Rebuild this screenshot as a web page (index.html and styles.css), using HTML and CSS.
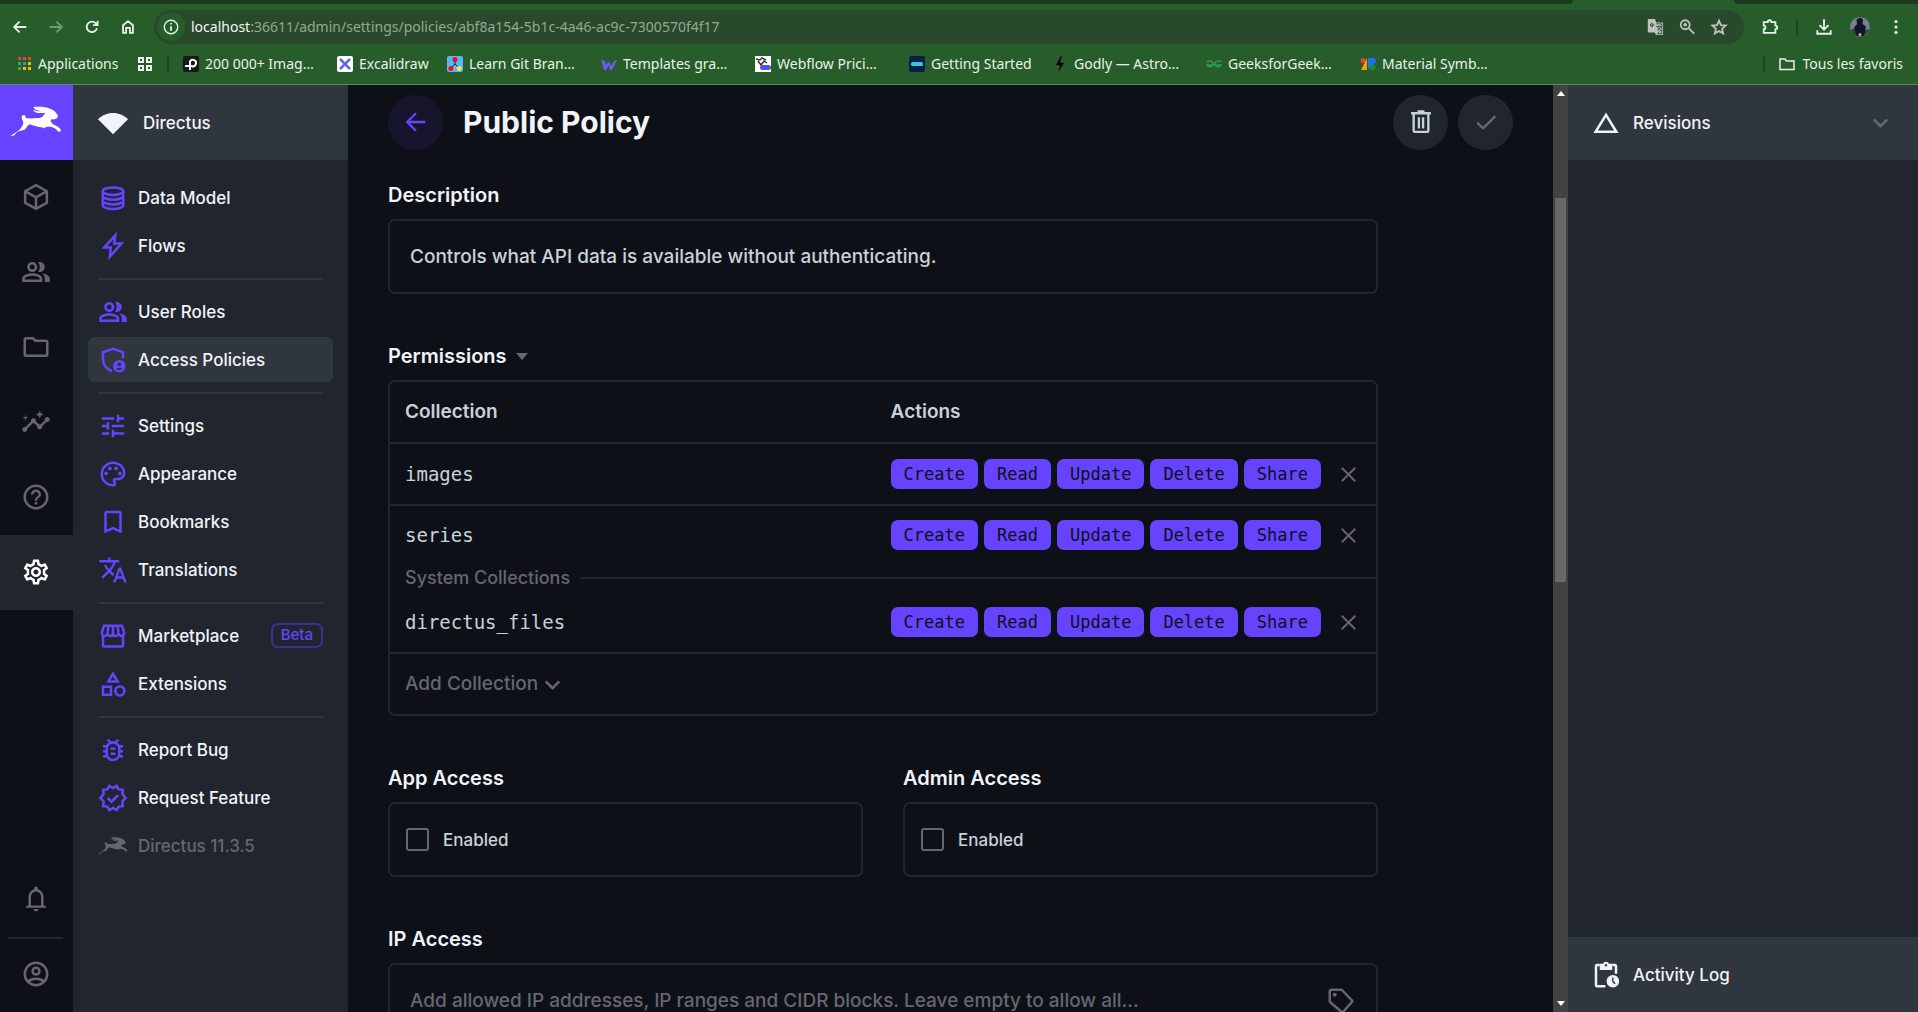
FILE: index.html
```html
<!DOCTYPE html>
<html lang="en">
<head>
<meta charset="utf-8">
<title>Public Policy</title>
<link rel="stylesheet" href="styles.css">
</head>
<body>
<svg class="sprite" aria-hidden="true">
  <symbol id="hare" viewBox="30 80 156 98"><path d="M33 172c0-4 4-6 8-8 8-5 14-9 20-15 6-6 9-13 9-20-1-5-6-8-5-15 1-5 6-7 9-5 4 2 1 6 4 8 14 3 28-1 42 0 8-4 14-10 15-16-8 1-17 2-24 0-7-2-11-6-12-9 10 5 19 5 27 5-8-1-17-3-22-7-3-3-4-6-2-7 10 1 22-1 33 2 7 1 12 4 17 5 7 2 13 6 17 13 4 4 5 7 4 11-2 5-9 8-16 7-5 0-6 3-4 7 3 6 9 9 15 12 6 3 12 7 14 12 1 3 0 6-3 6-4 1-6-2-8-4-5-6-10-9-17-10-9-2-17-1-24 4-3 0-4-2-2-4-12 3-25-4-38-8-6 2-9 6-12 12-4 7-13 7-22 9-7 2-9 8-12 11-4 3-8 3-12-1z"/></symbol>
  <symbol id="cube" viewBox="0 0 24 24"><path class="ln" d="M12 2.5l8.7 4.9v9.2L12 21.5l-8.700-4.900V7.400zM3.500 7.500L12 12.300l8.500-4.800M12 12.300v9"/></symbol>
  <symbol id="people" viewBox="0 0 24 24"><path d="M16.67 13.13C18.04 14.06 19 15.32 19 17v3h4v-3c0-2.18-3.57-3.47-6.33-3.87zM15 12c2.21 0 4-1.79 4-4s-1.79-4-4-4c-.47 0-.91.1-1.33.24C14.5 5.27 15 6.58 15 8s-.5 2.73-1.33 3.76c.42.14.86.24 1.33.24zM9 12c2.21 0 4-1.79 4-4s-1.79-4-4-4-4 1.79-4 4 1.79 4 4 4zm0-6c1.1 0 2 .9 2 2s-.9 2-2 2-2-.9-2-2 .9-2 2-2zm0 7c-2.67 0-8 1.34-8 4v3h16v-3c0-2.66-5.33-4-8-4zm6 5H3v-.99C3.2 16.29 6.3 15 9 15s5.8 1.29 6 2v1z"/></symbol>
  <symbol id="folder" viewBox="0 0 24 24"><path d="M9.17 6l2 2H20v10H4V6h5.17M10 4H4c-1.1 0-1.99.9-1.99 2L2 18c0 1.1.9 2 2 2h16c1.1 0 2-.9 2-2V8c0-1.100-.9-2-2-2h-8l-2-2z"/></symbol>
  <symbol id="insights" viewBox="0 0 24 24"><path d="M21 8c-1.45 0-2.26 1.44-1.93 2.51l-3.55 3.56c-.3-.09-.74-.09-1.04 0l-2.55-2.55C12.27 10.45 11.46 9 10 9c-1.45 0-2.27 1.44-1.93 2.52l-4.56 4.55C2.44 15.74 1 16.55 1 18c0 1.1.9 2 2 2 1.45 0 2.26-1.44 1.93-2.51l4.55-4.56c.3.09.74.09 1.04 0l2.55 2.55C12.73 16.55 13.54 18 15 18c1.45 0 2.27-1.44 1.93-2.52l3.56-3.55C21.56 12.26 23 11.45 23 10c0-1.1-.9-2-2-2zM15 9l.94-2.07L18 6l-2.060-.93L15 3l-.92 2.070L12 6l2.080.93zM3.500 11L4 9l2-.5L4 8l-.5-2L3 8l-2 .5L3 9z"/></symbol>
  <symbol id="help" viewBox="0 0 24 24"><path d="M11 18h2v-2h-2v2zm1-16C6.48 2 2 6.48 2 12s4.480 10 10 10 10-4.480 10-10S17.520 2 12 2zm0 18c-4.410 0-8-3.590-8-8s3.590-8 8-8 8 3.590 8 8-3.590 8-8 8zm0-14c-2.210 0-4 1.790-4 4h2c0-1.100.9-2 2-2s2 .9 2 2c0 2-3 1.750-3 5h2c0-2.250 3-2.500 3-5 0-2.210-1.790-4-4-4z"/></symbol>
  <symbol id="gear" viewBox="0 0 24 24"><path d="M19.43 12.98c.04-.32.07-.64.07-.98 0-.34-.03-.66-.07-.98l2.11-1.65c.19-.15.24-.42.12-.64l-2-3.46c-.09-.16-.26-.25-.44-.25-.06 0-.12.01-.17.03l-2.49 1c-.52-.4-1.08-.73-1.69-.98l-.38-2.65C14.46 2.18 14.25 2 14 2h-4c-.25 0-.46.18-.49.42l-.38 2.65c-.61.25-1.17.59-1.69.98l-2.49-1c-.06-.02-.12-.03-.18-.03-.17 0-.34.09-.43.25l-2 3.46c-.13.22-.07.49.12.64l2.11 1.65c-.04.32-.07.65-.07.98 0 .33.03.66.07.98l-2.11 1.65c-.19.15-.24.42-.12.64l2 3.46c.09.16.26.25.44.25.06 0 .12-.01.17-.03l2.49-1c.52.4 1.08.73 1.69.98l.38 2.65c.03.24.24.42.49.42h4c.25 0 .46-.18.49-.42l.38-2.65c.61-.25 1.17-.59 1.69-.98l2.49 1c.06.02.12.03.18.03.17 0 .34-.09.43-.25l2-3.46c.12-.22.07-.49-.12-.64l-2.11-1.65zm-1.98-1.71c.04.31.05.52.05.73 0 .21-.02.43-.05.73l-.14 1.13.89.7 1.08.84-.7 1.21-1.27-.51-1.04-.42-.9.68c-.43.32-.84.56-1.25.73l-1.06.43-.16 1.13-.2 1.35h-1.4l-.19-1.35-.16-1.13-1.06-.43c-.43-.18-.83-.41-1.23-.71l-.91-.7-1.06.43-1.27.51-.7-1.21 1.08-.84.89-.7-.14-1.13c-.03-.31-.05-.54-.05-.74s.02-.43.05-.73l.14-1.13-.89-.7-1.08-.84.7-1.21 1.27.51 1.04.42.9-.68c.43-.32.84-.56 1.25-.73l1.06-.43.16-1.13.2-1.35h1.39l.19 1.35.16 1.13 1.06.43c.43.18.83.41 1.23.71l.91.7 1.06-.43 1.27-.51.7 1.21-1.07.85-.89.7.14 1.13zM12 8c-2.210 0-4 1.790-4 4s1.790 4 4 4 4-1.790 4-4-1.790-4-4-4zm0 6c-1.100 0-2-.9-2-2s.9-2 2-2 2 .9 2 2-.9 2-2 2z"/></symbol>
  <symbol id="bell" viewBox="0 0 24 24"><path d="M4 19v-1.600h2V10q0-2.075 1.250-3.688T10.500 4.200v-.7q0-.625.438-1.062T12 2t1.063.438T13.500 3.500v.7q2 .5 3.250 2.113T18 10v7.400h2V19zm8 3q-.825 0-1.412-.587T10 20h4q0 .825-.587 1.413T12 22zm-4-4.800h8V10q0-1.650-1.175-2.825T12 6 9.175 7.175 8 10z"/></symbol>
  <symbol id="account" viewBox="0 0 24 24"><g class="ln"><circle cx="12" cy="12" r="9"/><circle cx="12" cy="9.700" r="2.700"/><path d="M5.500 18.100c3.500-3 9.500-3 13 0"/></g></symbol>
  <symbol id="project" viewBox="0 0 24 24"><path d="M12 4C7.310 4 3.070 5.900 0 8.980L12 21 24 8.980C20.930 5.900 16.690 4 12 4z"/></symbol>
  <symbol id="database" viewBox="0 0 24 24"><g class="ln"><ellipse cx="12" cy="6.500" rx="8.200" ry="3"/><path d="M3.800 6.500v11.300c0 1.600 3.700 3 8.200 3s8.200-1.400 8.200-3V6.500M3.800 10.300c0 1.600 3.700 3 8.200 3s8.200-1.400 8.200-3M3.800 14.100c0 1.600 3.700 3 8.200 3s8.200-1.400 8.200-3"/></g></symbol>
  <symbol id="bolt" viewBox="0 0 24 24"><path class="ln" d="M13.800 3.500L5 13.200h5.200L9.500 20.500 18.800 10h-5.900z"/></symbol>
  <symbol id="shield" viewBox="0 0 24 24"><path class="ln" d="M20 10.500V5.800L12 3 4 5.800v5.400c0 4.300 3 8 7.300 9.800"/><path fill-rule="evenodd" d="M17 12a5 5 0 1 1 0 10 5 5 0 0 1 0-10zm0 2a1.600 1.600 0 1 0 0 3.200 1.600 1.600 0 0 0 0-3.200zm-2.600 5c1.300 1.500 3.900 1.500 5.200 0-1.500-1-3.700-1-5.200 0z"/></symbol>
  <symbol id="tune" viewBox="0 0 24 24"><path d="M3 17v2h6v-2H3zM3 5v2h10V5H3zm10 16v-2h8v-2h-8v-2h-2v6h2zM7 9v2H3v2h4v2h2V9H7zm14 4v-2H11v2h10zm-6-4h2V7h4V5h-4V3h-2v6z"/></symbol>
  <symbol id="palette" viewBox="0 0 24 24"><path d="M12 22C6.490 22 2 17.510 2 12S6.490 2 12 2s10 4.040 10 9c0 3.310-2.690 6-6 6h-1.770c-.28 0-.5.22-.5.5 0 .12.05.23.13.33.41.47.64 1.060.64 1.670A2.500 2.500 0 0 1 12 22zm0-18c-4.410 0-8 3.590-8 8s3.590 8 8 8c.28 0 .5-.22.5-.5a.54.54 0 0 0-.14-.35c-.41-.46-.63-1.050-.63-1.650a2.500 2.500 0 0 1 2.500-2.500H16c2.210 0 4-1.790 4-4 0-3.860-3.590-7-8-7z"/><circle cx="6.500" cy="11.500" r="1.500"/><circle cx="9.500" cy="7.500" r="1.500"/><circle cx="14.500" cy="7.500" r="1.500"/><circle cx="17.500" cy="11.500" r="1.500"/></symbol>
  <symbol id="bookmark" viewBox="0 0 24 24"><path d="M17 3H7c-1.100 0-2 .9-2 2v16l7-3 7 3V5c0-1.100-.9-2-2-2zm0 15l-5-2.180L7 18V5h10v13z"/></symbol>
  <symbol id="translate" viewBox="0 0 24 24"><path d="M12.870 15.070l-2.540-2.510.03-.03c1.740-1.940 2.980-4.170 3.710-6.530H17V4h-7V2H8v2H1v1.990h11.170C11.500 7.920 10.440 9.750 9 11.350 8.070 10.320 7.300 9.190 6.690 8h-2c.73 1.630 1.730 3.170 2.980 4.560l-5.090 5.020L4 19l5-5 3.110 3.110.76-2.040zM18.500 10h-2L12 22h2l1.120-3h4.750L21 22h2l-4.500-12zm-2.620 7l1.620-4.330L19.120 17h-3.240z"/></symbol>
  <symbol id="store" viewBox="0 0 24 24"><g class="ln"><path d="M4 11.500V19.500q0 .8.800.8h14.400q.8 0 .8-.8V11.500"/><path d="M4.800 3.800h14.400l1.700 5.200c.4 3.800-4.200 3.800-4.500.6-.3 3.200-4.300 3.200-4.400 0-.1 3.200-4.100 3.200-4.400 0-.3 3.200-4.900 3.200-4.500-.6zM8.300 4l-.7 5.600M12 4v5.600M15.700 4l.7 5.600"/></g></symbol>
  <symbol id="shapes" viewBox="0 0 24 24"><path class="ln" d="M12 3.800L8.300 10h7.400zM4 14.200h6.400v6.400H4z"/><circle class="ln" cx="17.500" cy="17.500" r="3.600"/></symbol>
  <symbol id="bug" viewBox="0 0 24 24"><path d="M20 8h-2.810c-.45-.78-1.070-1.450-1.820-1.960L17 4.410 15.590 3l-2.170 2.170C12.960 5.060 12.490 5 12 5s-.96.06-1.410.17L8.410 3 7 4.410l1.620 1.630C7.880 6.550 7.260 7.220 6.810 8H4v2h2.090c-.05.33-.09.66-.09 1v1H4v2h2v1c0 .34.04.67.09 1H4v2h2.810c1.040 1.790 2.970 3 5.190 3s4.150-1.210 5.190-3H20v-2h-2.090c.05-.33.09-.66.09-1v-1h2v-2h-2v-1c0-.34-.04-.67-.09-1H20V8zm-4 4v3c0 .22-.03.47-.07.7l-.1.65-.37.65c-.72 1.240-2.040 2-3.460 2s-2.740-.77-3.460-2l-.37-.64-.1-.65C8.030 15.480 8 15.230 8 15v-4c0-.23.03-.48.07-.7l.1-.65.37-.65c.3-.52.72-.97 1.210-1.310l.57-.39.74-.18c.31-.08.63-.12.94-.12.32 0 .63.04.95.12l.68.16.61.42c.5.34.91.78 1.210 1.310l.38.65.1.65c.04.22.07.47.07.69v1zm-6 2h4v2h-4zm0-4h4v2h-4z"/></symbol>
  <symbol id="verified" viewBox="0 0 24 24"><path class="ln" d="M12 4.100l2.900-1.700 1.700 2.700 3.200.3-.3 3.300L22 12l-2.500 2.800.3 3.700-3.200.4-1.700 2.700-2.900-1.700-2.900 1.700-1.700-2.700-3.200-.4.300-3.700L2 12l2.500-3.300-.3-3.300 3.200-.3 1.700-2.700zM7.800 12l3 3 5.200-5.200"/></symbol>
  <symbol id="back" viewBox="0 0 24 24"><path class="ln" d="M20 12H5M12 4.500L4.500 12l7.500 7.500"/></symbol>
  <symbol id="trash" viewBox="0 0 24 24"><path class="ln" d="M3.500 4.500h17M9 3h6M5.700 5V19.500q0 1 1 1h10.600q1 0 1-1V5M10.200 8v9.500M13.800 8v9.500"/></symbol>
  <symbol id="check" viewBox="0 0 24 24"><path class="ln" d="M4.500 12.500l5 5L20 7"/></symbol>
  <symbol id="chevron" viewBox="0 0 24 24"><path class="ln thick" d="M5.500 9l6.500 6.500L18.500 9"/></symbol>
  <symbol id="close" viewBox="0 0 24 24"><path class="ln medium-line" d="M5.500 5.500l13 13M18.500 5.500l-13 13"/></symbol>
  <symbol id="tagicon" viewBox="0 0 24 24"><path class="ln" d="M3 4.500q0-1.500 1.500-1.500H12q.6 0 1 .4l7.800 8.200q.5.500 0 1l-7.200 8.200q-.6.500-1.100 0L3.400 13Q3 12.600 3 12z"/><circle cx="7" cy="7" r="1.600"/></symbol>
  <symbol id="delta" viewBox="0 0 24 24"><path class="ln" d="M12 5.500L3.700 19h16.600z"/></symbol>
  <symbol id="log" viewBox="0 0 24 24"><path class="ln" d="M11.500 21H5q-1 0-1-1V5q0-1 1-1h2M17 4h2q1 0 1 1v6"/><path fill-rule="evenodd" d="M7 3h2.600a2.600 2.600 0 0 1 4.800 0H17v5H7zm5 .2a1 1 0 1 0 0 2 1 1 0 0 0 0-2zM17.500 12a5 5 0 1 1 0 10 5 5 0 0 1 0-10zm-.6 2v3.300l2 2 .8-.8-1.700-1.700V14z"/></symbol>
</svg>

<header class="browser">
  <div class="tabstrip"><span class="tabs-left"></span><span class="tabs-right"></span></div>
  <div class="toolbar">
    <button class="tool" aria-label="Back"><svg viewBox="0 0 20 20"><path class="ln" d="M17 10H4M9.500 4L3.500 10l6 6"/></svg></button>
    <button class="tool faded" aria-label="Forward"><svg viewBox="0 0 20 20"><path class="ln" d="M3 10h13M10.500 4l6 6-6 6"/></svg></button>
    <button class="tool" aria-label="Reload"><svg viewBox="0 0 20 20"><path class="ln" d="M15.500 11.500a5.800 5.800 0 1 1-1.300-5.600L16 7.800M16.200 3v5h-5"/></svg></button>
    <button class="tool" aria-label="Home"><svg viewBox="0 0 20 20"><path class="ln" d="M4.500 8L10 3.500 15.500 8v8.500h-3.400V11H7.900v5.500H4.500z"/></svg></button>
    <div class="address">
      <span class="site-info"><svg viewBox="0 0 20 20"><circle class="ln thin" cx="10" cy="10" r="7.500"/><path class="ln" d="M10 9.200v5M10 5.600v1.700"/></svg></span>
      <span class="url"><b>localhost</b>:36611/admin/settings/policies/abf8a154-5b1c-4a46-ac9c-7300570f4f17</span>
      <svg class="address-icon" viewBox="0 0 20 20"><path d="M2 1h8l1.300 4H18q1 0 1 1v12q0 1-1 1h-7l-1.200-3H3q-1 0-1-1z"/><path class="cut" d="M9 7.500H6.500v1.200h1.300c-.3 1.300-2.900 1.300-2.900-.8 0-1.800 1.700-2.300 2.700-1.300M11.500 6.500H17.500v11H13l2-2.500M11.500 9.500h5.500M14 8.500v1M16 9.500c-.5 2-2 3.500-3 4.500M12.500 10.500l4 4"/></svg>
      <svg class="address-icon" viewBox="0 0 20 20"><circle class="ln" cx="8" cy="7.500" r="5"/><path class="ln" d="M11.800 11.300L18 17.500M8 5.500v4M6 7.500h4"/></svg>
      <svg class="address-icon" viewBox="0 0 20 20"><path class="ln" d="M10 3l2.100 4.900 5.300.5-4 3.500 1.200 5.200L10 14.400l-4.600 2.700 1.200-5.200-4-3.500 5.300-.5z"/></svg>
    </div>
    <button class="tool" aria-label="Extensions"><svg viewBox="0 0 20 20"><path class="ln" d="M3 4.500h4.500a2 2 0 0 1 4 0H16v4a2 2 0 0 1 0 4v4H3v-4a2 2 0 0 0 0-4z"/></svg></button>
    <span class="bar"></span>
    <button class="tool" aria-label="Downloads"><svg viewBox="0 0 20 20"><path class="ln" d="M10 1.500v11M5 8l5 5 5-5M2.500 13.500v4h15v-4"/></svg></button>
    <button class="tool profile" aria-label="Profile"><svg viewBox="0 0 20 20"><circle cx="10" cy="10" r="10" fill="#77808c"/><path d="M.5 13Q5 10 10 12t9.500 0A10 10 0 0 1 .5 13z" fill="#2c4a30"/><path d="M6 17.500l-2-7L7 7l-.5-4.500L10 .500l3 2L12.500 7 16 9.500 14 19H7.500z" fill="#12152a"/><circle cx="10" cy="17.500" r="1.500" fill="#e0a08c"/></svg></button>
    <button class="tool" aria-label="Menu"><svg viewBox="0 0 20 20"><circle cx="10" cy="4" r="1.700"/><circle cx="10" cy="10" r="1.700"/><circle cx="10" cy="16" r="1.700"/></svg></button>
  </div>
  <nav class="bookmarks" aria-label="Bookmarks">
    <a class="bm apps" href="#"><svg viewBox="0 0 16 16"><path fill="#ea4335" d="M2 1h3v3H2zM7 1h3v3H7zM12 1h3v3h-3z"/><path fill="#34a853" d="M2 6h3v3H2zM2 11h3v3H2z"/><path fill="#4285f4" d="M7 6h3v3H7z"/><path fill="#fbbc05" d="M12 6h3v3h-3zM7 11h3v3H7zM12 11h3v3h-3z"/></svg>Applications</a>
    <button class="tabgroups" aria-label="Tab groups"><svg viewBox="0 0 16 16"><path class="ln" d="M2 2h4v4H2zM10 2h4v4h-4zM2 10h4v4H2zM10 10h4v4h-4z"/></svg></button>
    <span class="bar"></span>
    <a class="bm long" href="#"><svg viewBox="0 0 16 16"><rect width="16" height="16" rx="2" fill="#16181a"/><path class="ln" stroke="#fff" d="M7 14V5.500a3.200 3.200 0 1 1 1.500 4.500H2"/></svg>200 000+ Imag…</a>
    <a class="bm short" href="#"><svg viewBox="0 0 16 16"><rect width="16" height="16" rx="2" fill="#fff"/><path class="ln thick" stroke="#6965db" d="M3 3l10 10M13 3L3 13"/></svg>Excalidraw</a>
    <a class="bm long" href="#"><svg viewBox="0 0 16 16"><rect width="16" height="16" rx="2" fill="#5ab4f5"/><path stroke="#222" fill="none" d="M8 4v4L4 12M8 8l4 4"/><circle cx="8" cy="3.500" r="2.500" fill="#e11"/><circle cx="3.800" cy="12.500" r="2.500" fill="#e11"/><circle cx="12.200" cy="12.500" r="2.500" fill="#ee3"/></svg>Learn Git Bran…</a>
    <a class="bm long" href="#"><svg viewBox="0 0 16 16"><path fill="#6a5cf5" d="M0 4l4 1 1 4 3-4 2 5 3-5 3-1-5 10H9L8 9l-3 5H3z"/></svg>Templates gra…</a>
    <a class="bm long" href="#"><svg viewBox="0 0 16 16"><path fill="#fff" d="M0 0h16v16H0z"/><path class="ln thin" stroke="#333" d="M1 3l4 1 2-2 4 2M3 5l3 4 3-4 3 2"/><rect x="5" y="9" width="11" height="5" rx="2.500" fill="#554cf0"/></svg>Webflow Prici…</a>
    <a class="bm medium" href="#"><svg viewBox="0 0 16 16"><rect width="16" height="16" rx="2" fill="#06204a"/><rect x="2" y="6" width="12" height="4" rx="1.500" fill="#38c5dc"/></svg>Getting Started</a>
    <a class="bm long" href="#"><svg viewBox="0 0 16 16"><path d="M9 0L4 9l4 .500L6 16l6-9-4-.500L10 0z" fill="#000"/></svg>Godly — Astro…</a>
    <a class="bm long" href="#"><svg viewBox="0 0 16 16"><path class="ln thin" stroke="#2f9b4d" d="M1 6c2-2 6-1 6 2s-5 4-6 1h14c-1 3-6 2-6-1s4-4 6-2"/></svg>GeeksforGeek…</a>
    <a class="bm long" href="#"><svg viewBox="0 0 16 16"><circle cx="3" cy="4.500" r="2.500" fill="#ea4335"/><path fill="#fb9d00" d="M7 2L1 14h6z"/><path fill="#1a73e8" d="M8 2h5a3 3 0 0 1 0 6L8 14z"/><circle cx="12.500" cy="11" r="3" fill="#1e8e3e"/></svg>Material Symb…</a>
    <span class="bar push"></span>
    <a class="bm all" href="#"><svg viewBox="0 0 16 16"><path class="ln thin" d="M1 3h5l1.500 2H15v8.500H1z"/></svg>Tous les favoris</a>
  </nav>
</header>

<div class="app">
  <nav class="modules" aria-label="Modules">
    <a class="logo" href="#" aria-label="Directus"><svg><use href="#hare"/></svg></a>
    <a href="#" aria-label="Content"><svg><use href="#cube"/></svg></a>
    <a href="#" aria-label="Users"><svg><use href="#people"/></svg></a>
    <a href="#" aria-label="Files"><svg><use href="#folder"/></svg></a>
    <a href="#" aria-label="Insights"><svg><use href="#insights"/></svg></a>
    <a href="#" aria-label="Help"><svg><use href="#help"/></svg></a>
    <a class="current" href="#" aria-label="Settings"><svg><use href="#gear"/></svg></a>
    <button class="bell" aria-label="Notifications"><svg><use href="#bell"/></svg></button>
    <a class="account" href="#" aria-label="Account"><svg><use href="#account"/></svg></a>
  </nav>

  <aside class="nav">
    <div class="project"><svg><use href="#project"/></svg><span>Directus</span></div>
    <nav class="links" aria-label="Settings">
      <ul>
        <li><a href="#"><svg><use href="#database"/></svg>Data Model</a></li>
        <li><a href="#"><svg><use href="#bolt"/></svg>Flows</a></li>
      </ul>
      <ul>
        <li><a href="#"><svg><use href="#people"/></svg>User Roles</a></li>
        <li><a class="current" href="#"><svg><use href="#shield"/></svg>Access Policies</a></li>
      </ul>
      <ul>
        <li><a href="#"><svg><use href="#tune"/></svg>Settings</a></li>
        <li><a href="#"><svg><use href="#palette"/></svg>Appearance</a></li>
        <li><a href="#"><svg><use href="#bookmark"/></svg>Bookmarks</a></li>
        <li><a href="#"><svg><use href="#translate"/></svg>Translations</a></li>
      </ul>
      <ul>
        <li><a href="#"><svg><use href="#store"/></svg>Marketplace<span class="badge">Beta</span></a></li>
        <li><a href="#"><svg><use href="#shapes"/></svg>Extensions</a></li>
      </ul>
      <ul>
        <li><a href="#"><svg><use href="#bug"/></svg>Report Bug</a></li>
        <li><a href="#"><svg><use href="#verified"/></svg>Request Feature</a></li>
        <li><a class="version" href="#"><svg><use href="#hare"/></svg>Directus 11.3.5</a></li>
      </ul>
    </nav>
  </aside>

  <main class="main">
    <header class="title-bar">
      <button class="round back" aria-label="Back"><svg><use href="#back"/></svg></button>
      <h1>Public Policy</h1>
      <button class="round" aria-label="Delete"><svg><use href="#trash"/></svg></button>
      <button class="round disabled" aria-label="Save"><svg><use href="#check"/></svg></button>
    </header>

    <form class="form">
      <div class="field full">
        <label for="description">Description</label>
        <input class="box" id="description" type="text" value="Controls what API data is available without authenticating.">
      </div>

      <div class="field full">
        <h2>Permissions <svg class="caret" viewBox="0 0 12 7"><path d="M0 0h12L6 7z"/></svg></h2>
        <div class="permissions">
          <table>
            <thead><tr><th scope="col">Collection</th><th scope="col" colspan="2">Actions</th></tr></thead>
            <tbody>
              <tr class="ruled"><td class="name">images</td><td class="actions"><div class="tags"><button type="button">Create</button><button type="button">Read</button><button type="button">Update</button><button type="button">Delete</button><button type="button">Share</button></div></td><td class="remove"><button type="button" aria-label="Remove images"><svg><use href="#close"/></svg></button></td></tr>
              <tr><td class="name">series</td><td class="actions"><div class="tags"><button type="button">Create</button><button type="button">Read</button><button type="button">Update</button><button type="button">Delete</button><button type="button">Share</button></div></td><td class="remove"><button type="button" aria-label="Remove series"><svg><use href="#close"/></svg></button></td></tr>
              <tr class="system"><td colspan="3"><div class="divider">System Collections</div></td></tr>
              <tr class="ruled"><td class="name">directus_files</td><td class="actions"><div class="tags"><button type="button">Create</button><button type="button">Read</button><button type="button">Update</button><button type="button">Delete</button><button type="button">Share</button></div></td><td class="remove"><button type="button" aria-label="Remove directus_files"><svg><use href="#close"/></svg></button></td></tr>
            </tbody>
          </table>
          <button class="add" type="button">Add Collection<svg><use href="#chevron"/></svg></button>
        </div>
      </div>

      <div class="field">
        <h2>App Access</h2>
        <label class="box toggle"><input type="checkbox" name="app_access">Enabled</label>
      </div>
      <div class="field">
        <h2>Admin Access</h2>
        <label class="box toggle"><input type="checkbox" name="admin_access">Enabled</label>
      </div>

      <div class="field full">
        <label for="ip">IP Access</label>
        <div class="box with-icon">
          <input id="ip" type="text" placeholder="Add allowed IP addresses, IP ranges and CIDR blocks. Leave empty to allow all...">
          <svg><use href="#tagicon"/></svg>
        </div>
      </div>
    </form>
  </main>

  <div class="scrollbar" aria-hidden="true">
    <svg viewBox="0 0 8 5"><path d="M4 0l4 5H0z"/></svg>
    <div class="track"><span class="thumb"></span></div>
    <svg viewBox="0 0 8 5"><path d="M0 0h8L4 5z"/></svg>
  </div>

  <aside class="sidebar">
    <button class="panel"><svg><use href="#delta"/></svg>Revisions<svg class="expand"><use href="#chevron"/></svg></button>
    <button class="panel last"><svg><use href="#log"/></svg>Activity Log</button>
  </aside>
</div>
</body>
</html>
```

FILE: styles.css
```css
:root {
  --bg: #0d1117;
  --bg-normal: #21262e;
  --bg-accent: #30363d;
  --fg: #c9d1d9;
  --fg-accent: #f0f4f9;
  --fg-subdued: #666672;
  --primary: #6644ff;
  --chrome: #275c2b;
  --chrome-dark: #1c3a1e;
}

* { box-sizing: border-box; }

body {
  margin: 0;
  height: 100vh;
  display: flex;
  flex-direction: column;
  overflow: hidden;
  background: var(--bg);
  color: var(--fg);
  font: 500 17px/28px Inter, "Liberation Sans", sans-serif;
}

.sprite { display: none; }
svg { fill: currentColor; flex: none; display: block; }
.ln { fill: none; stroke: currentColor; stroke-width: 2; }
.ln[stroke="#fff"] { stroke: #fff; }
.ln[stroke="#6965db"] { stroke: #6965db; }
.ln[stroke="#333"] { stroke: #333; }
.ln[stroke="#2f9b4d"] { stroke: #2f9b4d; }
.thin { stroke-width: 1.5; }
.medium-line { stroke-width: 1.8; }
.thick { stroke-width: 2.5; }
button { background: none; border: 0; padding: 0; margin: 0; color: inherit; font: inherit; cursor: pointer; }
a { color: inherit; text-decoration: none; }
h1, h2 { margin: 0; }

/* Browser window */
.browser {
  flex: none;
  background: var(--chrome);
  border-bottom: 1px solid #5a8a5d;
  color: #e9f2e9;
  font: 400 14px/20px "Noto Sans", sans-serif;
}
.tabstrip { display: flex; justify-content: space-between; height: 4px; }
.tabs-left { width: 82%; background: var(--chrome-dark); border-bottom-right-radius: 4px; }
.tabs-right { width: 184px; background: var(--chrome-dark); border-bottom-left-radius: 4px; }
.toolbar { display: flex; align-items: center; height: 46px; padding: 0 12px 0 10px; }
.toolbar .tool { width: 20px; margin-right: 16px; display: grid; place-items: center; }
.toolbar .tool svg { width: 18px; height: 18px; }
.toolbar .profile svg { width: 20px; height: 20px; }
.toolbar .tool:last-child { margin-right: 0; }
.toolbar .faded { opacity: .4; }
.toolbar .bar { margin-right: 16px; }
.bar { width: 2px; height: 16px; background: #1b431f; }
.address {
  flex: 1;
  height: 34px;
  display: flex;
  align-items: center;
  gap: 14px;
  margin: 0 16px 0 0;
  padding: 0 16px 0 3px;
  border-radius: 17px;
  background: #284a2a;
  color: #93a894;
}
.site-info { width: 28px; height: 28px; border-radius: 50%; background: var(--chrome); color: #e9f2e9; display: grid; place-items: center; margin-right: -8px; }
.site-info svg { width: 18px; height: 18px; }
.url { flex: 1; }
.url b { font-weight: 400; color: #f0f6f0; }
.address-icon { width: 18px; height: 18px; color: #bcc4bc; }
.cut { fill: none; stroke: #284a2a; stroke-width: 1; }
.bookmarks { display: flex; align-items: center; height: 34px; padding: 0 15px 6px 16px; white-space: nowrap; }
.bm { display: flex; align-items: center; gap: 6px; }
.bm svg { width: 16px; height: 16px; }
.apps { width: 121px; }
.tabgroups svg { width: 16px; height: 16px; }
.tabgroups { margin-right: 14px; }
.bookmarks .bar { margin-right: 14px; }
.long { width: 154px; }
.medium { width: 143px; }
.short { width: 110px; }
.all { gap: 8px; }
.bookmarks .push { margin-left: auto; }

/* Application shell */
.app { flex: 1; min-height: 0; display: flex; }

.modules { width: 73px; display: flex; flex-direction: column; color: var(--fg-subdued); }
.modules > * { flex: none; height: 75px; padding: 0 2px 1px 0; display: grid; place-items: center; }
.modules svg { width: 30px; height: 30px; }
.modules .logo { background: var(--primary); color: #fff; }
.modules .logo svg { width: 52px; height: 34px; }
.modules .current { background: var(--bg-normal); color: #fff; }
.modules .bell { margin-top: auto; }
.modules .account { position: relative; }
.modules .account::before { content: ""; position: absolute; top: 0; left: 8px; right: 10px; height: 2px; background: var(--bg-normal); }

.nav { width: 275px; background: var(--bg-normal); color: var(--fg-accent); }
.project { height: 75px; padding: 0 25px; display: flex; align-items: center; gap: 15px; background: var(--bg-accent); }
.nav svg { width: 30px; height: 30px; }
.links { padding: 15px; }
.links ul { list-style: none; margin: 0; padding: 0; display: flex; flex-direction: column; gap: 3px; }
.links ul + ul::before { content: ""; height: 2px; margin: 10px 10px 6px; background: var(--bg-accent); }
.links a { height: 45px; padding: 0 10px; display: flex; align-items: center; gap: 10px; border-radius: 6px; }
.links svg { color: var(--primary); }
.links .current { background: var(--bg-accent); }
.links .version, .links .version svg { color: var(--fg-subdued); }
.badge { margin-left: auto; height: 25px; padding: 0 8px; border: 2px solid #3d2e94; border-radius: 7px; color: var(--primary); font-size: 15px; line-height: 20px; }

/* Policy page */
.main { flex: 1; min-width: 0; overflow: hidden; }
.title-bar { height: 75px; padding: 0 40px; display: flex; align-items: center; gap: 10px; }
.title-bar h1 { flex: 1; padding: 0 0 2px 10px; color: var(--fg-accent); font-size: 30px; line-height: 38px; font-weight: 700; }
.round { width: 55px; height: 55px; padding-bottom: 1px; border-radius: 50%; display: grid; place-items: center; background: var(--bg-normal); }
.round svg { width: 28px; height: 28px; }
.round.back { background: #16152b; color: var(--primary); }
.round.disabled { color: var(--fg-subdued); }

.form { max-width: 1070px; padding: 21px 40px 48px; display: grid; grid-template-columns: 1fr 1fr; gap: 48px 40px; }
.full { grid-column: 1 / -1; }
.field { display: flex; flex-direction: column; gap: 10px; }
.field > h2, .field > label:not(.box) { display: flex; align-items: center; gap: 9px; color: var(--fg-accent); font-size: 20px; line-height: 28px; font-weight: 600; }
.caret { width: 12px; height: 7px; color: var(--fg-subdued); }
.box { width: 100%; height: 75px; padding: 0 20px; border: 2px solid var(--bg-normal); border-radius: 7px; background: transparent; color: inherit; font: inherit; font-size: 19px; outline: 0; }
.toggle { display: flex; align-items: center; gap: 14px; padding: 0 16px; font-size: 17px; }
.toggle input { appearance: none; width: 23px; height: 23px; margin: 0; border: 2px solid var(--fg-subdued); border-radius: 3px; }
.with-icon { display: flex; align-items: center; }
.with-icon input { flex: 1; min-width: 0; padding: 0; border: 0; background: none; color: inherit; font: inherit; outline: 0; }
.with-icon input::placeholder { color: var(--fg-subdued); opacity: 1; }
.with-icon svg { width: 30px; height: 30px; color: var(--fg-subdued); }

.permissions { border: 2px solid var(--bg-normal); border-radius: 7px; }
table { width: 100%; border-collapse: separate; border-spacing: 0; }
th, td { padding: 0; text-align: left; height: 58px; }
th { height: 62px; font-size: 19px; font-weight: 600; }
th:first-child, .name { padding-left: 15px; }
th, .ruled td { border-bottom: 2px solid var(--bg-normal); }
.ruled td { height: 62px; }
.name { font: 400 19px/28px "DejaVu Sans Mono", monospace; }
.actions { width: 430px; }
.tags { display: flex; gap: 6px; }
.tags button { height: 30px; padding: 0 13px; border-radius: 7px; background: var(--primary); color: var(--bg); font: 400 17px/30px "DejaVu Sans Mono", monospace; }
.remove { width: 55px; }
.remove button { display: block; margin-left: 15px; color: var(--fg-subdued); }
.remove svg { width: 25px; height: 25px; }
.system td { height: 28px; }
.divider { display: flex; align-items: center; gap: 10px; padding-left: 15px; color: var(--fg-subdued); font-size: 18px; }
.divider::after { content: ""; flex: 1; height: 2px; background: var(--bg-normal); }
.add { height: 60px; padding: 0 15px; display: flex; align-items: center; gap: 2px; color: var(--fg-subdued); font-size: 19px; }
.add svg { width: 25px; height: 25px; }

.scrollbar { width: 15px; padding: 6px 2px; display: flex; flex-direction: column; align-items: center; gap: 4px; background: #424242; color: #fff; }
.scrollbar svg { width: 8px; height: 5px; }
.track { flex: 1; width: 100%; padding-top: 98px; }
.thumb { display: block; height: 48%; background: #686868; }

.sidebar { width: 350px; display: flex; flex-direction: column; background: var(--bg-normal); color: var(--fg-accent); }
.panel { height: 75px; padding: 0 25px 0 23px; display: flex; align-items: center; gap: 12px; background: var(--bg-accent); }
.panel svg { width: 30px; height: 30px; }
.panel .expand { width: 25px; height: 25px; margin-left: auto; color: var(--fg-subdued); }
.panel.last { margin-top: auto; }
```
